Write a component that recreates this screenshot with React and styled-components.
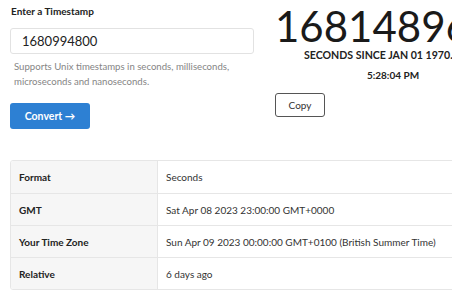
import React from 'react';
import styled, { createGlobalStyle } from 'styled-components';

const GlobalStyle = createGlobalStyle`
  html, body {
    margin: 0;
    padding: 0;
    background: #fff;
    font-family: Lato, 'Open Sans', sans-serif;
    color: #222;
    overflow: hidden;
  }
`;

const Page = styled.div`
  width: 452px;
  height: 300px;
  overflow: hidden;
  padding: 3px 0 0 10px;
  box-sizing: border-box;
`;

const Top = styled.div`
  display: flex;
  gap: 21px;
`;

const Left = styled.div`
  width: 244px;
  flex: none;
`;

const Label = styled.div`
  font-size: 10px;
  font-weight: 700;
  line-height: 16px;
  margin-bottom: 9px;
  padding-left: 1px;
`;

const Input = styled.input`
  display: block;
  width: 244px;
  height: 26px;
  box-sizing: border-box;
  border: 1px solid #e2e2e2;
  border-radius: 3px;
  padding: 0 11px;
  font-family: inherit;
  font-size: 13px;
  color: #222;
  outline: none;
`;

const Help = styled.p`
  margin: 5px 0 0 4px;
  font-size: 9.6px;
  line-height: 15px;
  color: #858585;
`;

const PrimaryButton = styled.button`
  margin-top: 14px;
  width: 80px;
  height: 26px;
  border: none;
  border-radius: 3px;
  background: #2d80d3;
  color: #fff;
  font-family: inherit;
  font-size: 10.5px;
  font-weight: 700;
  cursor: pointer;
`;

const Right = styled.div`
  width: 236px;
  flex: none;
  text-align: center;
  padding-top: 2px;
`;

const Big = styled.div`
  font-size: 42px;
  line-height: 42px;
  white-space: nowrap;
  color: #1a1a1a;
`;

const Sub = styled.div`
  font-size: 10.6px;
  font-weight: 700;
  line-height: 12px;
  white-space: nowrap;
  margin-top: 2px;
  color: #222;
`;

const Time = styled.div`
  font-size: 10px;
  font-weight: 700;
  line-height: 12px;
  margin-top: 8px;
`;

const CopyRow = styled.div`
  text-align: left;
  margin-top: 12px;
`;

const OutlineButton = styled.button`
  width: 50px;
  height: 24px;
  background: #fff;
  border: 1px solid #555;
  border-radius: 3px;
  font-family: inherit;
  font-size: 10px;
  color: #333;
  cursor: pointer;
`;

const Table = styled.div`
  margin-top: 31px;
  width: 460px;
  border: 1px solid #e6e6e6;
  border-radius: 3px;
  overflow: hidden;
`;

const Row = styled.div`
  display: grid;
  grid-template-columns: 147px 1fr;
  height: 32px;
  border-top: ${p => (p.first ? 'none' : '1px solid #e6e6e6')};
  box-sizing: border-box;
  font-size: 10px;
`;

const Key = styled.div`
  background: #f6f6f6;
  border-right: 1px solid #e6e6e6;
  font-weight: 700;
  display: flex;
  align-items: center;
  padding-left: 8px;
`;

const Value = styled.div`
  display: flex;
  align-items: center;
  padding-left: 8px;
  color: #333;
  white-space: nowrap;
`;

const rows = [
  ['Format', 'Seconds'],
  ['GMT', 'Sat Apr 08 2023 23:00:00 GMT+0000'],
  ['Your Time Zone', 'Sun Apr 09 2023 00:00:00 GMT+0100 (British Summer Time)'],
  ['Relative', '6 days ago']
];

export default function App() {
  return (
    <Page>
      <GlobalStyle />
      <Top>
        <Left>
          <Label>Enter a Timestamp</Label>
          <Input defaultValue="1680994800" />
          <Help>
            Supports Unix timestamps in seconds, milliseconds, microseconds and
            nanoseconds.
          </Help>
          <PrimaryButton>Convert →</PrimaryButton>
        </Left>
        <Right>
          <Big>1681489684</Big>
          <Sub>SECONDS SINCE JAN 01 1970. (UTC)</Sub>
          <Time>5:28:04 PM</Time>
          <CopyRow>
            <OutlineButton>Copy</OutlineButton>
          </CopyRow>
        </Right>
      </Top>
      <Table>
        {rows.map(([k, v], i) => (
          <Row key={k} first={i === 0}>
            <Key>{k}</Key>
            <Value>{v}</Value>
          </Row>
        ))}
      </Table>
    </Page>
  );
}
